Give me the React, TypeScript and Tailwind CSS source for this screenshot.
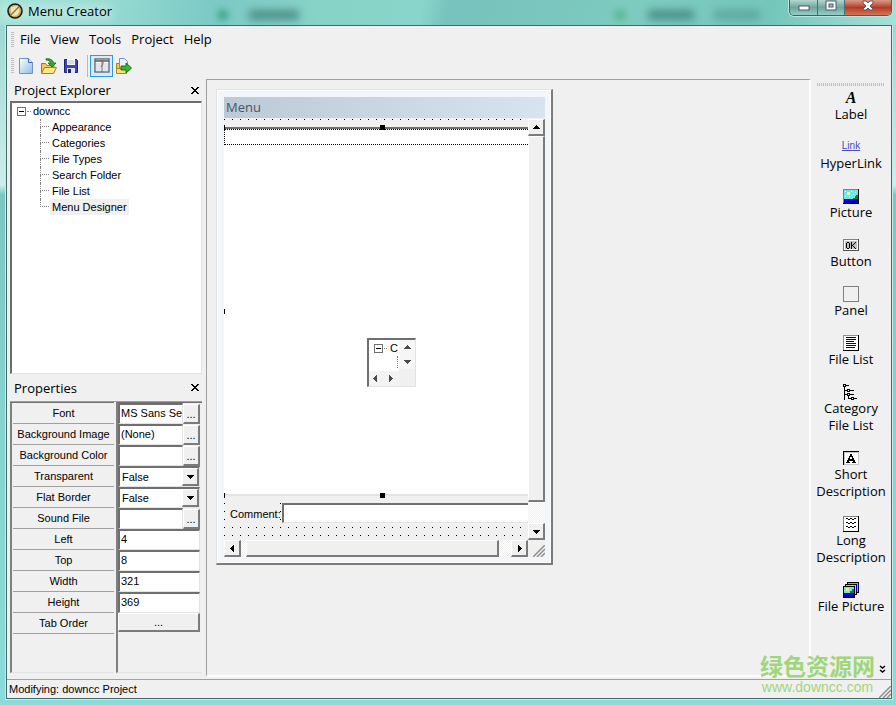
import type { ReactNode } from "react";
import clsx from "clsx";

const MENUS = ["File", "View", "Tools", "Project", "Help"];

const TREE = ["Appearance", "Categories", "File Types", "Search Folder", "File List", "Menu Designer"];

type Prop = { id: string; label: string; kind: "browse" | "select" | "text" | "button"; value?: string };

const PROPS: Prop[] = [
  { id: "font", label: "Font", kind: "browse", value: "MS Sans Serif" },
  { id: "bg-image", label: "Background Image", kind: "browse", value: "(None)" },
  { id: "bg-color", label: "Background Color", kind: "browse" },
  { id: "transparent", label: "Transparent", kind: "select" },
  { id: "flat-border", label: "Flat Border", kind: "select" },
  { id: "sound", label: "Sound File", kind: "browse" },
  { id: "left", label: "Left", kind: "text", value: "4" },
  { id: "top", label: "Top", kind: "text", value: "8" },
  { id: "width", label: "Width", kind: "text", value: "321" },
  { id: "height", label: "Height", kind: "text", value: "369" },
  { id: "tab-order", label: "Tab Order", kind: "button" },
];

const SMALL = "font-['Liberation_Sans',Arial,sans-serif] text-[11px]";
const SUNKEN = "border-t-2 border-l-2 border-r border-b border-t-[#6f6f6f] border-l-[#6f6f6f] border-r-[#e3e3e3] border-b-[#e3e3e3]";
const RAISED = "border-t border-l border-r-2 border-b-2 border-t-white border-l-white border-r-[#7b7b7b] border-b-[#7b7b7b] bg-[#f0f0f0]";

// 16x16 の小さいアイコン用
function Pix({ children, className }: { children: ReactNode; className?: string }) {
  return (
    <svg viewBox="0 0 16 16" className={clsx("h-4 w-4 shrink-0", className)} shapeRendering="crispEdges" aria-hidden="true">
      {children}
    </svg>
  );
}

function Arrow({ dir, className }: { dir: "up" | "down" | "left" | "right"; className?: string }) {
  const d = {
    up: "M0 5h7v-1h-1v-1h-1v-1h-1v-1h-1v1h-1v1h-1v1h-1z",
    down: "M0 2h7v1h-1v1h-1v1h-1v1h-1v-1h-1v-1h-1v-1h-1z",
    left: "M5 0v7h-1v-1h-1v-1h-1v-1h-1v-1h1v-1h1v-1h1v-1z",
    right: "M2 0v7h1v-1h1v-1h1v-1h1v-1h-1v-1h-1v-1h-1v-1z",
  }[dir];
  return (
    <svg viewBox="0 0 7 7" className={clsx("h-[7px] w-[7px]", className)} fill="currentColor" shapeRendering="crispEdges" aria-hidden="true">
      <path d={d} />
    </svg>
  );
}

function ScrollButton({ dir }: { dir: "up" | "down" | "left" | "right" }) {
  return (
    <button aria-label={`Scroll ${dir}`} className={clsx("flex h-[17px] w-[17px] shrink-0 items-center justify-center", RAISED)}>
      <Arrow dir={dir} />
    </button>
  );
}

function Minus() {
  return (
    <svg viewBox="0 0 9 9" className="h-[9px] w-[9px] shrink-0" shapeRendering="crispEdges" aria-hidden="true">
      <rect width="9" height="9" fill="#6f6f6f" />
      <rect x="1" y="1" width="7" height="7" fill="#fff" />
      <rect x="2" y="4" width="5" height="1" />
    </svg>
  );
}

function PanelHeader({ title, className }: { title: string; className?: string }) {
  return (
    <div className={clsx("flex items-center justify-between pl-1", className)}>
      <h2 className="text-[13px] leading-5">{title}</h2>
      <button aria-label={`Close ${title}`} className="py-1 pl-1 pr-[3px]">
        <svg viewBox="0 0 8 7" className="h-[7px] w-2" shapeRendering="crispEdges" aria-hidden="true">
          <path d="M0 0h2v1h1v1h2v-1h1v-1h2v1h-1v1h-1v1h-1v1h1v1h1v1h1v1h-2v-1h-1v-1h-2v1h-1v1h-2v-1h1v-1h1v-1h1v-1h-1v-1h-1v-1h-1z" />
        </svg>
      </button>
    </div>
  );
}

function TitleBar() {
  return (
    <header className="relative flex h-[25px] items-start bg-[linear-gradient(100deg,#9fe0d4_0%,#92d8d0_14%,#7cc9c5_24%,#88d3c7_36%,#8ad5cb_47%,#77c2bc_50%,#7ecbc0_72%,#74c6bb_86%,#a7e0d8_100%)] pl-[7px] pr-1">
      {/* ガラス越しに見える背景ウィンドウ */}
      <div className="absolute left-[217px] top-[9px] h-3 w-3 rounded-full bg-[#3f9f85] opacity-80 blur-[3px]" />
      <div className="absolute left-[249px] top-[10px] h-[10px] w-[50px] bg-[#3f7f78] opacity-80 blur-[4px]" />
      <div className="absolute left-[614px] top-[9px] h-3 w-3 rounded-full bg-[#56b58a] opacity-80 blur-[3px]" />
      <div className="absolute left-[648px] top-[10px] h-[10px] w-[46px] bg-[#3d8179] opacity-80 blur-[4px]" />
      <div className="absolute left-[714px] top-[10px] h-[10px] w-[46px] bg-[#4c9389] opacity-60 blur-[4px]" />
      <div className="absolute left-0 top-1 h-4 w-[112px] bg-white opacity-30 blur-[5px]" />
      <div className="relative flex h-[22px] flex-1 items-center gap-[5px]">
        <svg viewBox="0 0 16 16" className="h-4 w-4" aria-hidden="true">
          <circle cx="8" cy="8" r="7" fill="#c9ab62" stroke="#1d1d18" strokeWidth="1.6" />
          <path d="M4 4l7-1.500 1.500 6-2.500 4-5 .500-1.500-5z" fill="#f2e2ae" />
          <path d="M3.500 12.500L12 3.500" stroke="#8a7338" strokeWidth="1.200" />
        </svg>
        <h1 className="text-[13px] leading-5">Menu Creator</h1>
      </div>
      <div className="relative flex h-4 overflow-hidden rounded-b-[5px] border border-t-0 border-[#41605c] shadow-[0_0_0_1px_#b9e6df]">
        <button aria-label="Minimize" className="flex w-[28px] items-center justify-center border-r border-[#4e6f6b] bg-linear-to-b from-[#b3d6d0] via-[#71a49d] to-[#93cfc6]">
          <svg viewBox="0 0 12 6" className="h-[6px] w-3" aria-hidden="true">
            <rect x="1" y="1" width="10" height="4" fill="#fff" stroke="#4a5a62" />
          </svg>
        </button>
        <button aria-label="Maximize" className="flex w-[27px] items-start justify-center border-r border-[#4e6f6b] bg-linear-to-b from-[#b3d6d0] via-[#71a49d] to-[#93cfc6]">
          <svg viewBox="0 0 12 11" className="h-[11px] w-3" aria-hidden="true">
            <rect x="1" y="1" width="10" height="9" fill="#fff" stroke="#4a5a62" />
            <rect x="4" y="4" width="4" height="3" fill="#8fc3c8" stroke="#4a5a62" />
          </svg>
        </button>
        <button aria-label="Close" className="flex w-[46px] items-start justify-center bg-linear-to-b from-[#d99a8c] via-[#b53a22] to-[#d0755c]">
          <svg viewBox="0 0 12 11" className="h-[11px] w-3" aria-hidden="true">
            <path d="M1 1h3l2 2 2-2h3v2L8 6l3 3v1H8L6 8l-2 2H1V9l3-3-3-3z" fill="#fff" stroke="#5a4a50" strokeWidth="0.9" />
          </svg>
        </button>
      </div>
    </header>
  );
}

function Grip() {
  return <span className="h-[15px] w-[3px] bg-[repeating-linear-gradient(to_bottom,#c0c0c0_0_1px,#f0f0f0_1px_2px)]" />;
}

function Toolbar() {
  return (
    <div className="flex h-[27px] items-center pl-1">
      <Grip />
      <button aria-label="New" className="ml-1">
        <svg viewBox="0 0 16 16" className="h-4 w-4" aria-hidden="true">
          <defs>
            <linearGradient id="page" x1="0" y1="0" x2="1" y2="1">
              <stop offset="0" stopColor="#fff" />
              <stop offset="1" stopColor="#8dbbe8" />
            </linearGradient>
          </defs>
          <path d="M1.500.5h9l4 4v11h-13z" fill="url(#page)" stroke="#6f93c4" />
          <path d="M10.500.5v4h4" fill="#dbeaf9" stroke="#3f68a8" />
        </svg>
      </button>
      <button aria-label="Open" className="ml-[6px]">
        <svg viewBox="0 0 17 16" className="h-4 w-[17px]" aria-hidden="true">
          <path d="M1.500 14.500v-9h4l1.500 2h7v7z" fill="#f0c95a" stroke="#a9760f" />
          <path d="M1.500 15.500l3-6h12l-3 6z" fill="#ffe68a" stroke="#b07f14" />
          <path d="M6 .800c5-.5 7 1.700 7.500 4.200h2.500l-4 4-4-4h2.500C10 3 8.500 2 6 2z" fill="#2fae2a" stroke="#0c6a12" strokeWidth="0.800" />
        </svg>
      </button>
      <button aria-label="Save" className="ml-[6px]">
        <svg viewBox="0 0 16 16" className="h-4 w-4" aria-hidden="true">
          <path d="M1.500 1.500h12l1 1v12h-13z" fill="#3c46b4" stroke="#1d2478" />
          <rect x="4" y="1" width="8" height="6" fill="#f4f6fb" />
          <path d="M5 3h6M5 5h6" stroke="#a9b2c9" strokeWidth="0.800" />
          <rect x="4" y="10" width="8" height="5" fill="#dfe3ea" />
          <rect x="5" y="11" width="3" height="4" fill="#23286e" />
        </svg>
      </button>
      <span className="ml-2 h-[22px] w-px bg-[#b8b8b8]" />
      <button aria-label="Menu Designer" className="ml-[2px] flex h-[22px] w-[23px] items-center justify-center border border-[#3399dd] bg-[#d9eaf7]">
        <svg viewBox="0 0 16 16" className="h-4 w-4" aria-hidden="true">
          <rect x="1" y="1" width="14" height="13" fill="#fff" stroke="#566272" strokeWidth="1.300" />
          <path d="M1 3h14" stroke="#566272" strokeWidth="1.600" />
          <path d="M8 4v10" stroke="#566272" />
          <rect x="2" y="5" width="5" height="8" fill="#dde6ee" />
          <rect x="9" y="5" width="5" height="8" fill="#dde6ee" />
          <path d="M6 3l3-1v4L7 9" fill="none" stroke="#b5584a" />
        </svg>
      </button>
      <button aria-label="Build" className="ml-[2px]">
        <svg viewBox="0 0 17 16" className="h-4 w-[17px]" aria-hidden="true">
          <path d="M1.500 14.500v-9h3v9z" fill="#f4c94e" stroke="#b07f14" />
          <path d="M4.500.5h5l3 3v8h-8z" fill="#e8f1fc" stroke="#6f93c4" />
          <path d="M1.500 15.500v-5h10v5z" fill="#ffdf7a" stroke="#b07f14" />
          <path d="M6 8h5V5l5.500 5-5.500 5v-3H6z" fill="#3ab52e" stroke="#0c6a12" strokeWidth="0.900" />
        </svg>
      </button>
    </div>
  );
}

function ProjectTree() {
  return (
    <div className={clsx("flex-1 bg-white pl-[5px]", SMALL, SUNKEN)}>
      <div className="flex h-4 items-center">
        <button aria-label="Collapse downcc" className="flex">
          <Minus />
        </button>
        <span className="mx-px w-[4px] border-t border-dotted border-[#808080]" />
        <span className="pl-px leading-4">downcc</span>
      </div>
      <ul className="ml-[23px]">
        {TREE.map((name, i) => (
          <li key={name} className="flex h-4">
            <span className="w-[9px]">
              <span className="block h-2 border-b border-l border-dotted border-[#808080]" />
              {i < TREE.length - 1 && <span className="block h-2 border-l border-dotted border-[#808080]" />}
            </span>
            <button className={clsx("ml-px px-[2px] leading-4", name === "Menu Designer" && "bg-[#f0f0f0]")}>{name}</button>
          </li>
        ))}
      </ul>
    </div>
  );
}

function PropField({ prop }: { prop: Prop }) {
  if (prop.kind === "button") {
    return (
      <button id={prop.id} className={clsx("block h-[19px] w-full leading-3", RAISED)}>
        ...
      </button>
    );
  }
  if (prop.kind === "select") {
    return (
      <div className={clsx("flex h-[21px] bg-white", SUNKEN)}>
        <select id={prop.id} defaultValue="False" className="min-w-0 flex-1 appearance-none pl-[2px] outline-none">
          <option>False</option>
          <option>True</option>
        </select>
        <span className={clsx("flex w-[17px] items-center justify-center", RAISED)}>
          <Arrow dir="down" />
        </span>
      </div>
    );
  }
  return (
    <div className="flex h-[21px]">
      <input id={prop.id} defaultValue={prop.value} className={clsx("min-w-0 flex-1 bg-white pl-px pb-[2px] outline-none", SUNKEN)} />
      {prop.kind === "browse" && (
        <button aria-label={`Choose ${prop.label}`} className={clsx("mt-px w-[17px] leading-3", RAISED)}>
          ...
        </button>
      )}
    </div>
  );
}

function Properties() {
  return (
    <div className={clsx("flex h-[272px] gap-[2px] border-t border-[#a0a0a0]", SMALL)}>
      <div className="w-[104px] border-b border-l-2 border-t border-b-[#e3e3e3] border-l-[#808080] border-t-[#6f6f6f] pl-px">
        {PROPS.map((p) => (
          <label key={p.id} htmlFor={p.id} className="block h-[21px] border-b border-[#a0a0a0] text-center leading-5">
            {p.label}
          </label>
        ))}
      </div>
      <div className="min-w-0 flex-1 border-b border-l-2 border-t border-b-[#e3e3e3] border-l-[#808080] border-t-[#6f6f6f] pr-[2px]">
        {PROPS.map((p) => (
          <PropField key={p.id} prop={p} />
        ))}
      </div>
    </div>
  );
}

function Handle({ className }: { className: string }) {
  return <span className={clsx("absolute h-[5px] bg-black", className)} />;
}

function MenuWindow() {
  const dots = "bg-[conic-gradient(from_270deg_at_1px_1px,#000_90deg,transparent_0)] bg-[size:8px_8px] bg-[position:0_1px]";
  const track = "bg-[conic-gradient(#fff_90deg,#f0f0f0_0_180deg,#fff_0_270deg,#f0f0f0_0)] bg-[size:2px_2px]";
  return (
    <section className="ml-[9px] mt-[9px] w-[337px] border-b-2 border-l border-r-2 border-t border-b-[#7b7b7b] border-l-[#e3e3e3] border-r-[#7b7b7b] border-t-[#e3e3e3]">
      <div className="border border-[#fff] bg-[#f2f6fb] pb-[5px] pl-[6px] pr-[5px] pt-[6px]">
        <h2 className="h-[21px] bg-linear-to-r from-[#bccad8] to-[#d6e4f1] pl-[2px] text-[13px] leading-[21px] text-[#4c5560]">Menu</h2>
        <div className="flex">
          <div className="min-w-0 flex-1">
            <div className={clsx("flex h-[422px] flex-col bg-[#f0f0f0]", dots)}>
              {/* 選択中のファイルリスト */}
              <div className="relative mt-[9px] h-[369px] border-b-2 border-t-2 border-b-[#e3e3e3] border-t-[#6f6f6f] bg-white">
                <div className="h-4 border border-r-0 border-dotted border-black" />
                <Handle className="left-0 -top-1 w-px" />
                <Handle className="left-[156px] -top-1 w-[5px]" />
                <Handle className="left-0 top-[180px] w-px" />
                <Handle className="left-0 -bottom-1 w-px" />
                <Handle className="left-[156px] -bottom-1 w-[5px]" />
                <div className={clsx("absolute left-[143px] top-[209px] flex h-[49px] w-[49px] bg-[#f0f0f0]", SMALL, SUNKEN)}>
                  <div className="flex w-[30px] flex-col">
                    <div className="flex-1 bg-white pl-[5px]">
                      <div className="flex h-4 items-center overflow-hidden">
                        <Minus />
                        <span className="mx-px w-[3px] border-t border-dotted border-[#808080]" />
                        <span className="pl-[2px] leading-4">C</span>
                      </div>
                      <div className="ml-[23px] h-3 border-l border-dotted border-[#808080]" />
                    </div>
                    <div className="flex h-[15px] items-center gap-2 bg-[#f3f3f3] pb-px pl-[3px] text-[#4a4a4a]">
                      <Arrow dir="left" />
                      <Arrow dir="right" />
                    </div>
                  </div>
                  <div className="flex h-[29px] w-4 flex-col items-center justify-between bg-[#f6f6f6] py-1 text-[#4a4a4a]">
                    <Arrow dir="up" />
                    <Arrow dir="down" />
                  </div>
                </div>
              </div>
              <div className={clsx("mt-[7px] flex h-5 items-stretch pl-px", SMALL)}>
                <label htmlFor="comment" className="w-[55px] bg-[#f0f0f0] pl-[5px] leading-[22px]">
                  Comment:
                </label>
                <input id="comment" className="ml-[2px] min-w-0 flex-1 border-b border-l-2 border-t-2 border-b-[#e3e3e3] border-l-[#6f6f6f] border-t-[#6f6f6f] bg-white outline-none" />
              </div>
            </div>
            <div className={clsx("flex h-[17px]", track)}>
              <ScrollButton dir="left" />
              <div className={clsx("ml-[5px] flex-1", RAISED)} />
              <div className="w-3" />
              <ScrollButton dir="right" />
            </div>
          </div>
          <div className="flex w-[17px] flex-col bg-[#f0f0f0]">
            <div className={clsx("mt-px flex flex-1 flex-col", track)}>
              <ScrollButton dir="up" />
              <div className={clsx("flex-1", RAISED)} />
              <div className="h-[21px]" />
              <ScrollButton dir="down" />
            </div>
            <SizeGrip className="ml-auto mt-[5px]" />
          </div>
        </div>
      </div>
    </section>
  );
}

function SizeGrip({ className }: { className?: string }) {
  return (
    <svg viewBox="0 0 12 12" className={clsx("h-3 w-3", className)} aria-hidden="true">
      <path d="M0 12L12 0M4 12l8-8M8 12l4-4" stroke="#8f8f8f" strokeWidth="1.500" />
    </svg>
  );
}

const TOOLS: { name: string; icon: ReactNode }[] = [
  {
    name: "Label",
    icon: <span className="block font-['Liberation_Serif',serif] text-[16px] font-bold italic leading-4">A</span>,
  },
  {
    name: "HyperLink",
    icon: <span className="block font-['Liberation_Sans',sans-serif] text-[10px] leading-[14px] text-[#4a4ac4] underline">Link</span>,
  },
  {
    name: "Picture",
    icon: (
      <Pix>
        <rect y="1" width="16" height="15" fill="#000" />
        <rect y="1" width="15" height="14" fill="#808080" />
        <rect x="1" y="2" width="14" height="9" fill="#6fe6e6" />
        <path d="M2 3h1v1h-1zM8 3h1v1h-1zM12 4h1v1h-1zM10 6h1v1h-1zM2 8h1v1h-1zM6 8h1v1h-1z" fill="#d8ffff" />
        <rect x="4" y="4" width="3" height="3" fill="#f4f29a" />
        <path d="M10 11v-1h2v-2h1v-1h2v4z" fill="#087a4a" />
        <rect x="1" y="11" width="14" height="4" fill="#0000c8" />
      </Pix>
    ),
  },
  {
    name: "Button",
    icon: (
      <Pix>
        <path d="M0 2h16v12H0z" fill="#505050" />
        <path d="M0 2h15v11H0z" fill="#808080" />
        <path d="M1 3h14v10H1z" fill="#fff" />
        <path d="M2 4h12v8H2z" fill="#c0c0c0" />
        <path d="M4 5h2v1h1v5h-1v1h-2v-1h-1v-5h1zM4 6v5h2v-5z" fillRule="evenodd" />
        <path d="M8 5h1v3h1v-1h1v-1h1v-1h1v1h-1v1h-1v1h-1v1h1v1h1v1h1v1h-1v-1h-1v-1h-1v-1h-1v3h-1z" />
      </Pix>
    ),
  },
  {
    name: "Panel",
    icon: (
      <Pix>
        <rect width="16" height="16" fill="#808080" />
        <rect x="1" y="1" width="14" height="14" fill="#f0f0f0" />
      </Pix>
    ),
  },
  {
    name: "File List",
    icon: (
      <Pix>
        <rect width="16" height="16" />
        <rect width="15" height="15" fill="#909090" />
        <rect x="1" y="1" width="14" height="14" fill="#fff" />
        <path d="M3 2h10v1H3zM3 4h10v1H3zM3 6h8v1H3zM3 8h10v1H3zM3 10h10v1H3zM3 12h9v1H3z" fill="#000070" />
      </Pix>
    ),
  },
  {
    name: "Category\nFile List",
    icon: (
      <Pix>
        <path d="M1 1h1v15H1zM2 6h9v1H2zM2 10h9v1H2zM5 11h1v4H5zM5 14h9v1H5zM3 1h3v1H3z" />
        <path d="M0 0h3v3H0zM4 5h3v3H4zM4 9h3v3H4zM8 13h3v3H8z" />
        <path d="M1 1h1v1H1zM5 6h1v1H5zM5 10h1v1H5zM9 14h1v1H9z" fill="#fff" />
      </Pix>
    ),
  },
  {
    name: "Short\nDescription",
    icon: (
      <Pix>
        <rect y="1" width="16" height="14" />
        <rect x="1" y="2" width="15" height="13" fill="#c8c8c8" />
        <rect x="2" y="3" width="13" height="11" fill="#fff" />
        <path d="M7 4h2v2h1v2h1v2h1v2h1v1H9v-1h1v-1H6v1h1v1H3v-1h1v-2h1V8h1V6h1zM7 7v2h2V7z" fillRule="evenodd" />
      </Pix>
    ),
  },
  {
    name: "Long\nDescription",
    icon: (
      <Pix>
        <rect width="16" height="16" />
        <rect width="15" height="15" fill="#808080" />
        <rect x="1" y="1" width="14" height="14" fill="#fff" />
        <path d="M3 2h2v1h2v-1h2v1h2v-1h2v1h-2v1h-2v-1h-2v1h-2v-1h-2z" />
        <path d="M3 6h2v1h2v-1h2v1h2v-1h2v1h-2v1h-2v-1h-2v1h-2v-1h-2z" />
        <path d="M3 10h2v1h2v-1h2v1h2v-1h2v1h-2v1h-2v-1h-2v1h-2v-1h-2z" />
      </Pix>
    ),
  },
  {
    name: "File Picture",
    icon: (
      <Pix>
        <rect x="4" width="12" height="11" />
        <rect x="5" y="1" width="10" height="9" fill="#54c4c4" />
        <rect x="2" y="2" width="12" height="11" />
        <rect x="3" y="3" width="10" height="9" fill="#87e887" />
        <path d="M13 3h1v6h-1zM15 1h1v6h-1z" fill="#0000a0" />
        <rect y="4" width="12" height="12" />
        <rect x="1" y="5" width="10" height="6" fill="#6fe6e6" />
        <rect x="3" y="6" width="3" height="3" fill="#d8f29a" />
        <path d="M7 11V9h2V7h2v4z" fill="#087a4a" />
        <rect x="1" y="11" width="10" height="4" fill="#0000c8" />
      </Pix>
    ),
  },
];

function Palette() {
  return (
    <aside className="flex w-20 shrink-0 flex-col pt-1">
      <span className="mx-[6px] h-[3px] bg-[repeating-linear-gradient(to_right,#c0c0c0_0_1px,#f0f0f0_1px_2px)]" />
      <div className="mt-1 flex flex-col gap-4">
        {TOOLS.map((t) => (
          <button key={t.name} className="flex flex-col items-center">
            <span className="h-4">{t.icon}</span>
            <span className="whitespace-pre text-[13px] leading-[17px]">{t.name}</span>
          </button>
        ))}
      </div>
      <button aria-label="More tools" className="mb-[3px] mr-[5px] mt-auto self-end">
        <svg viewBox="0 0 7 9" className="h-[9px] w-[7px]" fill="none" stroke="#000" strokeWidth="1.400" aria-hidden="true">
          <path d="M1 1l2.500 2L6 1M1 5l2.500 2L6 5" />
        </svg>
      </button>
    </aside>
  );
}

export default function App() {
  return (
    <div className="relative flex min-h-screen flex-col bg-[linear-gradient(to_bottom,#8fd6cc_0,#a8ded8_60px,#cdeeea_185px,#7cc6c4_195px,#86d3d3_60%,#8adbdb_100%)] font-['Open_Sans','Noto_Sans',sans-serif] text-[13px] text-black">
      <TitleBar />
      <div className="mb-[6px] ml-[6px] mr-1 flex flex-1 flex-col border border-[#3f6b68] bg-[#f0f0f0] shadow-[0_0_0_1px_#c4ece8]">
        <nav className="flex h-[26px] items-center pl-1">
          <Grip />
          <div className="ml-[6px] flex gap-[10px]">
            {MENUS.map((m) => (
              <button key={m} className="leading-5">
                {m}
              </button>
            ))}
          </div>
        </nav>
        <Toolbar />
        <div className="flex flex-1">
          <div className="flex w-[199px] shrink-0 flex-col pb-1 pl-[3px] pr-1">
            <PanelHeader title="Project Explorer" className="h-[22px]" />
            <ProjectTree />
            <PanelHeader title="Properties" className="h-[27px]" />
            <Properties />
          </div>
          <main className="flex-1 border-b-2 border-l border-r-2 border-t border-b-white border-l-[#a0a0a0] border-r-white border-t-[#a0a0a0]">
            <MenuWindow />
          </main>
          <Palette />
        </div>
        <footer className={clsx("mt-[2px] flex h-[19px] items-center justify-between border-t border-[#a0a0a0] pl-[2px]", SMALL)}>
          <span>Modifying: downcc Project</span>
          <SizeGrip className="mt-auto" />
        </footer>
      </div>
      <div className="absolute bottom-[10px] right-[21px] text-center text-[#9fd67c]">
        <p className="font-['Noto_Sans_CJK_SC',sans-serif] text-[23px] font-bold leading-7">绿色资源网</p>
        <p className="font-['Liberation_Sans',Arial,sans-serif] text-[14px] leading-4">www.downcc.com</p>
      </div>
    </div>
  );
}
